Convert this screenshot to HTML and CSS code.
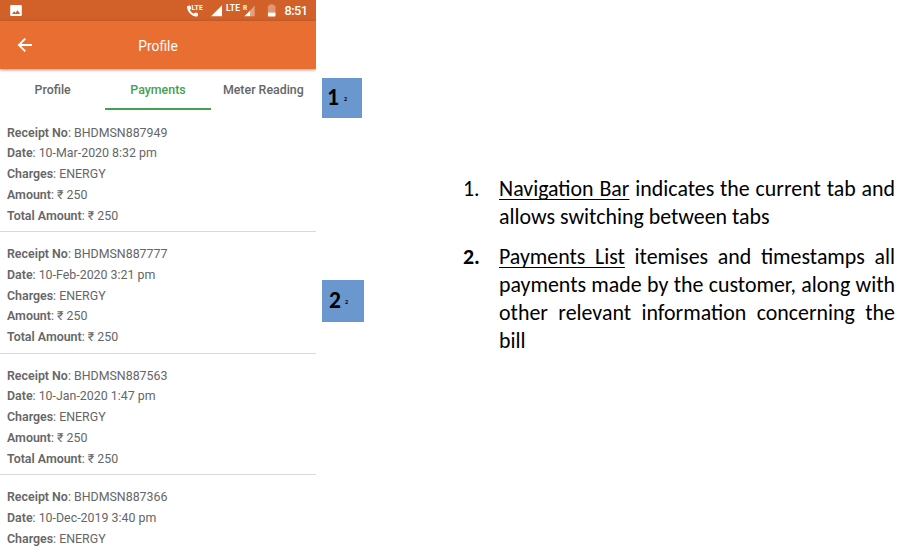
FILE: index.html
```html
<!DOCTYPE html>
<html lang="en">
<head>
<meta charset="utf-8">
<title>Profile payments</title>
<link rel="stylesheet" href="styles.css">
</head>
<body>
<main class="page">
  <section class="phone">
    <header class="status-bar">
      <svg class="status-icons" width="316" height="21" viewBox="0 0 316 21" fill="#fff">
        <path fill-rule="evenodd" d="M11.2 5h9.6q1 0 1 1v9q0 1-1 1h-9.600q-1 0-1-1V6q0-1 1-1zm.8 9h8.200l-2.700-3.800-2 2.600-1.400-1.500z"/>
        <path d="M187.300 6.100q-.5.4-.3 1.300c.8 4.600 4.200 8.200 9 9.100q1.200.2 1.700-.5l.4-2.200q0-.6-.6-.8l-2.300-.5-1.700 1.300q-2.500-1.400-3.600-3.700l1.200-1.500-.5-2.400q-.2-.6-.8-.6z"/>
        <path d="M211 16.300 222 5.300v11zM244.300 16.300l5.900-5.900v5.900z"/>
        <path opacity=".4" d="M250.200 10.400l4.500-4.900v10.800h-4.500z"/>
        <path opacity=".35" d="M270 4.300h3.400v1.200h2.100v7h-7.600v-7h2.100z"/>
        <path d="M267.900 12.500h7.600v3.200q0 .7-.7.700h-6.200q-.7 0-.7-.7z"/>
        <text class="tag" x="191.500" y="9.600" font-size="7" textLength="11.500">LTE</text>
        <text class="tag" x="226" y="11" font-size="8.500" textLength="14">LTE</text>
        <text class="tag" x="243" y="10" font-size="6.500">R</text>
        <text class="clock" x="284.500" y="15.300" font-size="12.800" textLength="23.500">8:51</text>
      </svg>
    </header>
    <div class="app-bar">
      <svg class="back" width="16" height="16" viewBox="0 0 16 16" fill="none" stroke="#fff" stroke-width="1.900"><path d="M15 8H2M8.200 1.700 1.900 8l6.300 6.300"/></svg>
      <h1 class="title">Profile</h1>
    </div>
    <nav class="tabs">
      <span class="tab">Profile</span>
      <span class="tab active">Payments</span>
      <span class="tab">Meter Reading</span>
    </nav>
    <div class="records">
      <article class="record">
        <p><b>Receipt No</b>: BHDMSN887949</p>
        <p><b>Date</b>: 10-Mar-2020 8:32 pm</p>
        <p><b>Charges</b>: ENERGY</p>
        <p><b>Amount</b>: ₹ 250</p>
        <p><b>Total Amount</b>: ₹ 250</p>
      </article>
      <article class="record">
        <p><b>Receipt No</b>: BHDMSN887777</p>
        <p><b>Date</b>: 10-Feb-2020 3:21 pm</p>
        <p><b>Charges</b>: ENERGY</p>
        <p><b>Amount</b>: ₹ 250</p>
        <p><b>Total Amount</b>: ₹ 250</p>
      </article>
      <article class="record">
        <p><b>Receipt No</b>: BHDMSN887563</p>
        <p><b>Date</b>: 10-Jan-2020 1:47 pm</p>
        <p><b>Charges</b>: ENERGY</p>
        <p><b>Amount</b>: ₹ 250</p>
        <p><b>Total Amount</b>: ₹ 250</p>
      </article>
      <article class="record">
        <p><b>Receipt No</b>: BHDMSN887366</p>
        <p><b>Date</b>: 10-Dec-2019 3:40 pm</p>
        <p><b>Charges</b>: ENERGY</p>
      </article>
    </div>
  </section>
  <aside class="markers">
    <div class="marker first">1<small>2</small></div>
    <div class="marker second">2<small>2</small></div>
  </aside>
  <ol class="notes">
    <li><span class="num">1.</span><p><u>Navigation Bar</u> indicates the current tab and allows switching between tabs</p></li>
    <li><span class="num bold">2.</span><p><u>Payments List</u> itemises and timestamps all payments made by the customer, along with other relevant information concerning the bill</p></li>
  </ol>
</main>
</body>
</html>
```
FILE: styles.css
```css
* { box-sizing: border-box; }
body, p, h1, ol { margin: 0; padding: 0; }
body { background: #fff; overflow: hidden; }
.page { display: flex; width: 904px; height: 552px; overflow: hidden; }
.phone { width: 316px; height: 552px; overflow: hidden; font-family: Roboto, sans-serif; color: #666; }
.status-bar { height: 21px; background: #d16029; }
.status-icons { display: block; }
.tag { font-family: Roboto, sans-serif; font-weight: 700; }
.clock { font-family: Roboto, sans-serif; font-weight: 500; }
.app-bar { display: grid; grid-template-columns: 17px 16px 1fr 33px; align-items: center; height: 48px; background: #e96e31; box-shadow: 0 1px 3px rgba(0,0,0,.4); }
.back { grid-column: 2; }
.title { grid-column: 3; padding-top: 1px; text-align: center; font-size: 13.8px; font-weight: 400; color: #fff; }
.tabs { display: grid; grid-template-columns: repeat(3, 1fr); height: 41px; font-size: 12.4px; font-weight: 500; text-align: center; }
.tab { height: 41px; padding-top: 2px; line-height: 38px; white-space: nowrap; }
.active { color: #43a052; border-bottom: 2px solid #43a052; }
.records { padding-top: .8px; }
.record { padding: 11.9px 7px 5px; border-bottom: 1px solid #d9d9d9; font-size: 12.4px; line-height: 20.72px; white-space: nowrap; }
.record b { font-weight: 600; }
.markers { width: 48px; padding: 78px 0 0 6px; font-family: Carlito, Lato, sans-serif; font-weight: 700; color: #000; }
.marker { display: flex; align-items: center; background: #6a98ce; padding: 0 0 2px 5px; font-size: 23.5px; gap: 5px; }
.marker small { font-size: 6px; padding-top: 4px; }
.first { width: 40px; height: 40px; }
.second { width: 42px; height: 42px; margin-top: 162px; padding-left: 7px; gap: 4px; }
.notes { width: 432px; margin: 175px 0 0 99px; list-style: none; font-family: Carlito, Lato, sans-serif; font-size: 21.9px; line-height: 28.1px; color: #000; }
.notes li { display: grid; grid-template-columns: 36px 396px; margin-bottom: 12px; }
.notes p { text-align: justify; }
.notes u { text-decoration-thickness: 1px; text-underline-offset: 3px; text-decoration-skip-ink: none; }
.bold { font-weight: 700; }
```
